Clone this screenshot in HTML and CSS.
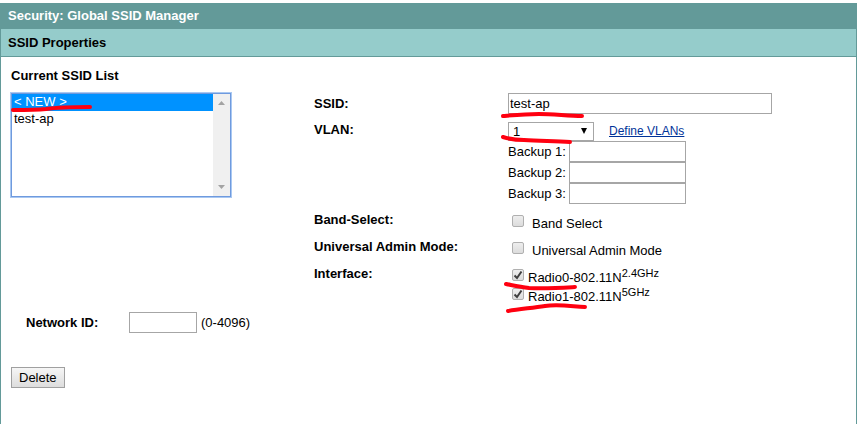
FILE: index.html
```html
<!DOCTYPE html>
<html lang="en">
<head>
<meta charset="utf-8">
<title>Security: Global SSID Manager</title>
<link rel="stylesheet" href="styles.css">
</head>
<body>
<main class="panel">
  <h1 class="title">Security: Global SSID Manager</h1>
  <h2 class="subtitle">SSID Properties</h2>
  <form class="content">
    <section class="side">
      <label class="heading" for="list">Current SSID List</label>
      <div class="listbox">
        <select id="list" class="list" size="6">
          <option selected>&lt; NEW &gt;</option>
          <option>test-ap</option>
        </select>
        <div class="scroll" aria-hidden="true">
          <svg width="7" height="4" viewBox="0 0 7 4"><path d="M0 4L3.5 0L7 4Z"/></svg>
          <svg width="7" height="4" viewBox="0 0 7 4"><path d="M0 0L3.5 4L7 0Z"/></svg>
        </div>
        <svg class="mark mark-list" width="84" height="10" viewBox="0 0 84 10" aria-hidden="true"><path d="M3 7C15 7 26 7 36 6C50 4 64 4 80 4"/></svg>
      </div>
      <div class="network">
        <label class="label" for="network">Network ID:</label>
        <input id="network" class="text network-input" type="text">
        <span>(0-4096)</span>
      </div>
      <button class="delete" type="button">Delete</button>
    </section>
    <section class="fields">
      <div class="row">
        <label class="label" for="ssid">SSID:</label>
        <div class="value">
          <input id="ssid" class="text ssid" type="text" value="test-ap">
          <svg class="mark mark-ssid" width="86" height="10" viewBox="0 0 86 10" aria-hidden="true"><path d="M3 6C15 5 25 4 39 4C54 4 68 6 82 6"/></svg>
        </div>
      </div>
      <div class="row vlan-row">
        <label class="label" for="vlan">VLAN:</label>
        <div class="value">
          <div class="vlan-line">
            <div class="picker">
              <select id="vlan" class="vlan"><option>1</option></select>
              <svg class="arrow" width="6" height="6" viewBox="0 0 6 6" aria-hidden="true"><path d="M0 0H6L3 6Z"/></svg>
            </div>
            <a href="#">Define VLANs</a>
          </div>
          <div class="backup"><label for="b1">Backup 1:</label><input id="b1" class="text" type="text"></div>
          <div class="backup"><label for="b2">Backup 2:</label><input id="b2" class="text" type="text"></div>
          <div class="backup"><label for="b3">Backup 3:</label><input id="b3" class="text" type="text"></div>
          <svg class="mark mark-vlan" width="74" height="12" viewBox="0 0 74 12" aria-hidden="true"><path d="M3 4C9 6 15 7 24 7C40 8 54 8 70 9"/></svg>
        </div>
      </div>
      <div class="row option-row">
        <span class="label">Band-Select:</span>
        <div class="value"><label class="check wide"><input type="checkbox">Band Select</label></div>
      </div>
      <div class="row option-row">
        <span class="label">Universal Admin Mode:</span>
        <div class="value"><label class="check wide"><input type="checkbox">Universal Admin Mode</label></div>
      </div>
      <div class="row">
        <span class="label">Interface:</span>
        <div class="value radios">
          <label class="check"><input type="checkbox" checked><span>Radio0-802.11N<sup>2.4GHz</sup></span></label>
          <label class="check"><input type="checkbox" checked><span>Radio1-802.11N<sup>5GHz</sup></span></label>
          <svg class="mark mark-radios" width="86" height="34" viewBox="0 0 86 34" aria-hidden="true"><path d="M3 4C13 6 17 7 26 8C42 9 56 8 72 7M5 31C17 29 29 28 42 26C54 24 66 26 82 27"/></svg>
        </div>
      </div>
    </section>
  </form>
</main>
</body>
</html>
```
FILE: styles.css
```css
* {
  box-sizing: border-box;
}

body {
  margin: 0;
  background: #fff;
  color: #000;
  font: 13px/22px "Liberation Sans", Arial, sans-serif;
}

input,
select,
button {
  margin: 0;
  font: inherit;
  color: inherit;
}

.panel {
  margin-top: 3px;
  min-height: calc(100vh - 3px);
  border: solid #639a99;
  border-width: 0 1px;
}

.title,
.subtitle {
  margin: 0;
  padding: 0 7px;
  font-size: 13px;
  line-height: 26px;
}

.title {
  background: #639a99;
  color: #fff;
}

.subtitle {
  background: #95cccb;
  border-bottom: 1px solid #639a99;
  line-height: 27px;
}

.content {
  display: flex;
  padding: 8px 10px;
}

.side {
  flex: 0 0 303px;
}

.heading,
.label {
  font-weight: bold;
}

.heading {
  display: block;
  margin-bottom: 6px;
}

.listbox {
  position: relative;
  display: flex;
  width: 220px;
  height: 104px;
  border: 1px solid #6f9ade;
  box-shadow: 0 0 0 1px #a9c8f2;
}

.list {
  flex: 1;
  height: 100%;
  padding: 0;
  border: 0;
  border-radius: 0;
  outline: 0;
  background: #fff;
  overflow: hidden;
}

.list option {
  min-height: 17px;
  padding: 0 2px;
  border-radius: 0;
  line-height: 17px;
}

.list option:checked {
  background: #0092ff linear-gradient(#0092ff, #0092ff);
  color: #fff;
  -webkit-text-fill-color: #fff;
}

.scroll {
  display: flex;
  flex-direction: column;
  justify-content: space-between;
  align-items: center;
  width: 17px;
  padding: 7px 0;
  background: #f0f0f0;
  fill: #a3a3a3;
}

.network {
  display: flex;
  align-items: center;
  gap: 4px;
  height: 21px;
  margin: 115px 0 34px;
  padding-left: 15px;
}

.network .label {
  width: 99px;
}

.text {
  height: 21px;
  padding: 0 1px;
  border: 1px solid #a6a6a6;
  background: #fff;
}

.network-input {
  width: 68px;
}

.delete {
  display: block;
  height: 21px;
  padding: 0 7px;
  border: 1px solid #a0a0a0;
  background: linear-gradient(#f6f6f6, #dddddd);
  line-height: 19px;
}

.fields {
  flex: 1;
  padding-top: 28px;
}

.row {
  display: grid;
  grid-template-columns: 194px 1fr;
  align-items: start;
}

.value {
  position: relative;
}

.ssid {
  display: block;
  width: 264px;
  max-width: 100%;
  margin-bottom: 5px;
}

.vlan-row {
  margin-bottom: 5px;
}

.vlan-line {
  display: flex;
  align-items: center;
  gap: 15px;
  height: 22px;
  padding-top: 2px;
}

.picker {
  position: relative;
  width: 86px;
}

.vlan {
  display: block;
  width: 100%;
  height: 19px;
  padding: 0 4px;
  border: 1px solid #a6a6a6;
  border-radius: 0;
  appearance: none;
  background: #fff;
  line-height: 17px;
}

.arrow {
  position: absolute;
  top: 6px;
  right: 7px;
}

a {
  color: #003399;
  font-size: 12px;
}

.backup {
  display: flex;
  height: 21px;
}

.backup label {
  width: 61px;
}

.backup .text {
  width: 117px;
}

.option-row {
  height: 27px;
}

.check {
  display: flex;
  align-items: center;
  gap: 4px;
  height: 19px;
  padding-left: 4px;
}

.wide {
  gap: 8px;
  height: 30px;
}

.radios {
  padding-top: 5px;
}

.check input {
  flex: none;
  width: 12px;
  height: 12px;
  margin-bottom: 6px;
  appearance: none;
  border: 1px solid #b0b0b0;
  border-radius: 2px;
  background: linear-gradient(#eeeeee, #dcdcdc);
}

.check input:checked {
  background: url("data:image/svg+xml,%3Csvg xmlns='http://www.w3.org/2000/svg' viewBox='0 0 10 10'%3E%3Cpath d='M1.5 5.5L4 8L8.500 1.500' fill='none' stroke='%23404040' stroke-width='2'/%3E%3C/svg%3E"), linear-gradient(#eeeeee, #dcdcdc);
}

sup {
  font-size: 11px;
  line-height: 0;
  vertical-align: 5px;
}

.mark {
  position: absolute;
  pointer-events: none;
  fill: none;
  stroke: #ff0010;
  stroke-width: 4;
  stroke-linecap: round;
  stroke-linejoin: round;
}

.mark-list {
  left: -2px;
  top: 9px;
}

.mark-ssid {
  left: -8px;
  top: 17px;
}

.mark-vlan {
  left: -8px;
  top: 14px;
}

.mark-radios {
  left: -5px;
  top: 17px;
}
```
